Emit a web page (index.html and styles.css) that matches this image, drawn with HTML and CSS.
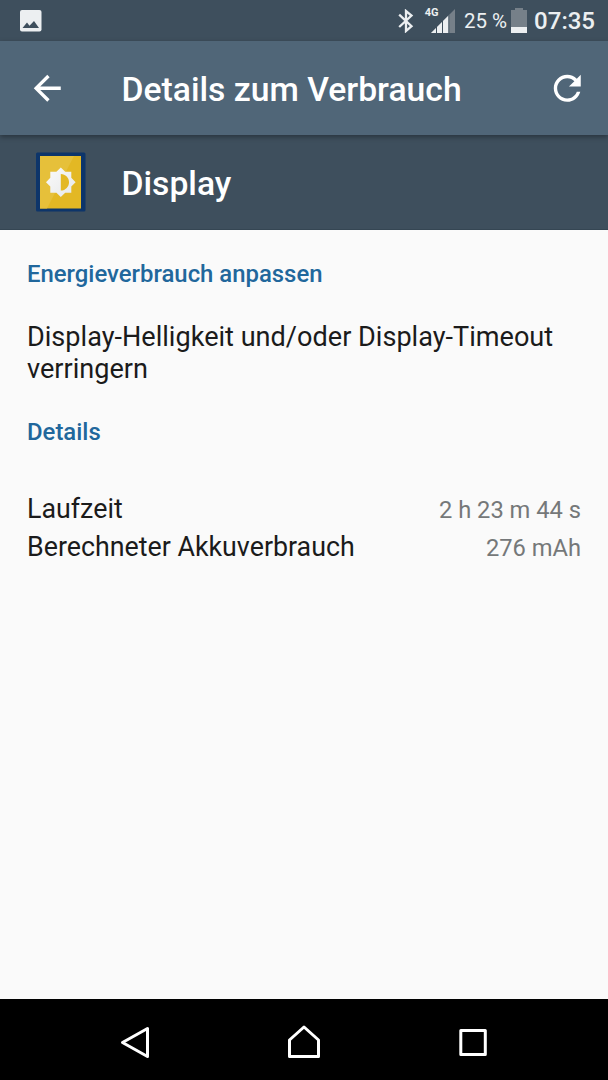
FILE: index.html
```html
<!DOCTYPE html>
<html lang="de">
<head>
    <meta charset="UTF-8">
    <meta name="viewport" content="width=device-width, initial-scale=1.0">
    <title>Details zum Verbrauch</title>
    <link rel="stylesheet" href="styles.css">
</head>
<body>
    <div class="status-bar">
        <svg class="picture-icon" width="22" height="22" viewBox="0 0 22 22">
            <rect x="0" y="0" width="21.5" height="21.5" rx="2" fill="#eceff1"/>
            <path d="M2.5 18 L7 12.5 L9.5 15.7 L14 11 L19 18 Z" fill="#3e4f5d"/>
        </svg>
        <div class="status-right">
            <svg class="bluetooth-icon" width="16" height="24" viewBox="0 0 16 24">
                <path d="M1.2 5.7 L13.5 17.2 L8 22 V2 L13.5 6.5 L1.2 18" fill="none" stroke="#eceff1" stroke-width="2.3"/>
            </svg>
            <div class="signal">
                <span class="network">4G</span>
                <svg class="signal-icon" width="25" height="24" viewBox="0 0 25 24">
                    <path d="M0 24 L24 0 V24 Z" fill="#768089"/>
                    <path d="M0 24 L18 6 V24 Z" fill="#eceff1"/>
                    <path d="M5.5 18 V24 M11.5 12 V24 M17.8 6 V24" stroke="#3e4f5d" stroke-width="1"/>
                </svg>
            </div>
            <span class="percent">25 %</span>
            <svg class="battery-icon" width="16" height="26" viewBox="0 0 16 26">
                <path d="M0 2 H4 V0 H12 V2 H16 V25 H0 Z" fill="#768089"/>
                <rect x="0" y="19" width="16" height="6" fill="#eceff1"/>
            </svg>
            <span class="clock">07:35</span>
        </div>
    </div>

    <header class="app-bar">
        <svg class="back-icon" width="40.5" height="40.5" viewBox="0 0 24 24">
            <path d="M20 11H7.83l5.59-5.59L12 4l-8 8 8 8 1.41-1.41L7.83 13H20v-2z" fill="#fff"/>
        </svg>
        <h1>Details zum Verbrauch</h1>
        <svg class="refresh-icon" width="40.5" height="40.5" viewBox="0 0 24 24">
            <path d="M17.65 6.35C16.2 4.9 14.21 4 12 4c-4.42 0-7.99 3.58-7.99 8s3.57 8 7.99 8c3.73 0 6.84-2.55 7.73-6h-2.08c-.82 2.33-3.04 4-5.65 4-3.31 0-6-2.69-6-6s2.69-6 6-6c1.66 0 3.14.69 4.22 1.78L13 11h7V4l-2.35 2.35z" fill="#fff"/>
        </svg>
    </header>

    <div class="entry-header">
        <svg class="display-icon" width="50" height="60" viewBox="0 0 50 60">
            <defs>
                <linearGradient id="shade" x1="0" y1="0" x2="1" y2="1">
                    <stop offset="0" stop-color="#fafafa"/>
                    <stop offset="1" stop-color="#e6e8e9"/>
                </linearGradient>
            </defs>
            <rect x="0" y="0.5" width="49.5" height="59" rx="1.5" fill="#0d356a"/>
            <rect x="4" y="4" width="41" height="52.5" fill="#e3b824"/>
            <path d="M4 4 H38 L11 56.5 H4 Z" fill="#e6c03a"/>
            <path d="M24.8 15.5 L29.2 19.7 H35.3 V25.8 L39.6 30.2 L35.3 34.6 V40.7 H29.2 L24.8 45 L20.4 40.7 H14.3 V34.6 L10 30.2 L14.3 25.8 V19.7 H20.4 Z" fill="url(#shade)"/>
            <path d="M24.8 22 C29.5 22 33 25.7 33 30.2 C33 34.7 29.5 38.5 24.8 38.5 Z" fill="#e3b824"/>
        </svg>
        <h2>Display</h2>
    </div>

    <main class="content">
        <h3 class="section-title">Energieverbrauch anpassen</h3>
        <p class="hint">Display-Helligkeit und/oder Display-Timeout verringern</p>
        <h3 class="section-title">Details</h3>
        <div class="details">
            <div class="row">
                <span class="label">Laufzeit</span>
                <span class="value">2 h 23 m 44 s</span>
            </div>
            <div class="row">
                <span class="label">Berechneter Akkuverbrauch</span>
                <span class="value">276 mAh</span>
            </div>
        </div>
    </main>

    <nav class="nav-bar">
        <svg width="32" height="36" viewBox="0 0 32 36">
            <path d="M3.5 17.5 L28.5 3.5 V31.5 Z" fill="none" stroke="#fff" stroke-width="3" stroke-linejoin="round"/>
        </svg>
        <svg width="34" height="36" viewBox="0 0 34 36">
            <path d="M2.5 15 L17 2 L31.5 15 V31.5 H2.5 Z" fill="none" stroke="#fff" stroke-width="3" stroke-linejoin="round"/>
        </svg>
        <svg width="32" height="36" viewBox="0 0 32 36">
            <rect x="3.8" y="5.5" width="24.5" height="24" fill="none" stroke="#fff" stroke-width="3" stroke-linejoin="round"/>
        </svg>
    </nav>
</body>
</html>
```
FILE: styles.css
```css
* {
    box-sizing: border-box;
}

body {
    font-family: Roboto, sans-serif;
    background-color: #fafafa;
    color: #1b1b1b;
    margin: 0;
    height: 1080px;
    display: flex;
    flex-direction: column;
}

svg {
    display: block;
    flex-shrink: 0;
}

h1, h2, h3, p {
    margin: 0;
}

.status-bar {
    height: 41px;
    background-color: #3e4f5d;
    color: #eceff1;
    display: flex;
    justify-content: space-between;
    align-items: center;
    padding: 0 13px 0 19.5px;
}

.status-right {
    display: flex;
    align-items: center;
}

.signal {
    display: flex;
    margin-left: 11px;
}

.network {
    font-size: 11px;
    font-weight: 700;
    line-height: 12px;
    margin-top: -2px;
    margin-right: -7.5px;
}

.percent {
    font-size: 20.5px;
    margin: 1px 4px 0 8px;
}

.clock {
    font-size: 24px;
    font-weight: 500;
    margin: 1px 0 0 7px;
}

.app-bar {
    height: 94px;
    background-color: #506678;
    color: #fff;
    display: flex;
    align-items: center;
    padding: 0 20.5px 0 27px;
    box-shadow: 0 2px 5px rgba(0, 0, 0, 0.35);
    z-index: 1;
}

.app-bar h1 {
    flex: 1;
    margin: 2px 0 0 54px;
    font-size: 33.7px;
    font-weight: 500;
    white-space: nowrap;
}

.entry-header {
    height: 95px;
    background-color: #3e4f5d;
    border-bottom: 1px solid #354653;
    color: #fff;
    display: flex;
    align-items: center;
    padding-left: 36px;
}

.entry-header h2 {
    margin: 2px 0 0 35.5px;
    font-size: 33.7px;
    font-weight: 500;
}

.content {
    flex: 1;
    padding: 30px 27px 0;
}

.section-title {
    color: #21679c;
    font-size: 23.9px;
    font-weight: 500;
    line-height: 28px;
}

.hint {
    font-size: 27.1px;
    line-height: 32px;
    margin: 33px 0;
}

.details {
    margin-top: 44px;
}

.row {
    display: flex;
    justify-content: space-between;
    align-items: baseline;
    height: 38px;
}

.label {
    font-size: 26.8px;
    line-height: 38px;
}

.value {
    color: #757879;
    font-size: 23.7px;
}

.nav-bar {
    height: 81px;
    background-color: #000;
    display: flex;
    justify-content: space-between;
    align-items: center;
    padding: 6px 119px 0;
}
```
